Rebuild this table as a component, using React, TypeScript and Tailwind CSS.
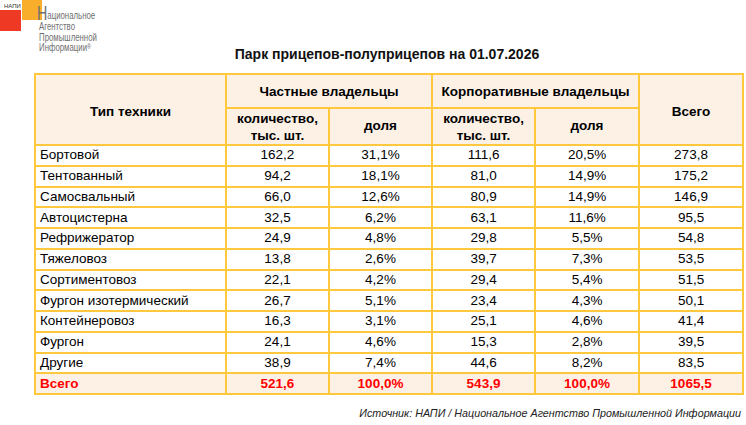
import React from "react";

const rows: [string, string, string, string, string, string][] = [
  ["Бортовой", "162,2", "31,1%", "111,6", "20,5%", "273,8"],
  ["Тентованный", "94,2", "18,1%", "81,0", "14,9%", "175,2"],
  ["Самосвальный", "66,0", "12,6%", "80,9", "14,9%", "146,9"],
  ["Автоцистерна", "32,5", "6,2%", "63,1", "11,6%", "95,5"],
  ["Рефрижератор", "24,9", "4,8%", "29,8", "5,5%", "54,8"],
  ["Тяжеловоз", "13,8", "2,6%", "39,7", "7,3%", "53,5"],
  ["Сортиментовоз", "22,1", "4,2%", "29,4", "5,4%", "51,5"],
  ["Фургон изотермический", "26,7", "5,1%", "23,4", "4,3%", "50,1"],
  ["Контейнеровоз", "16,3", "3,1%", "25,1", "4,6%", "41,4"],
  ["Фургон", "24,1", "4,6%", "15,3", "2,8%", "39,5"],
  ["Другие", "38,9", "7,4%", "44,6", "8,2%", "83,5"],
];

const bd = "border-2 border-[#ffc83d]";

export default function App() {
  return (
    <div className="relative w-[746px] h-[425px] bg-white overflow-hidden" style={{ fontFamily: "'Liberation Sans', Arial, sans-serif" }}>
      {/* Logo */}
      <div className="absolute left-0 top-0 w-[130px] h-[55px]">
        <div className="absolute left-[22px] top-0 w-[20px] h-[20px] bg-[#f9ae2b]" />
        <div className="absolute left-0 top-[10px] w-[21px] h-[21px] bg-[#ee3a24]" />
        <div className="absolute left-[4px] top-[3px] text-[6px] leading-[7px] text-[#333]">НАПИ</div>
        <div
          className="absolute left-[37px] top-[4px] origin-top-left scale-x-[0.68] text-[#6f6f6f] text-[11.5px] leading-[10.5px] whitespace-nowrap"
          style={{ fontFamily: "'Liberation Sans', sans-serif" }}
        >
          <div className="flex items-end">
            <span className="text-[21px] leading-[17px]">Н</span>
            <span className="leading-[11px]">ациональное</span>
          </div>
          <div className="pl-[3px]">Агентство</div>
          <div className="pl-[3px]">Промышленной</div>
          <div className="pl-[3px]">
            Информации<span className="text-[8px] align-top">®</span>
          </div>
        </div>
      </div>

      {/* Title */}
      <div className="absolute left-0 right-0 top-[44px] pl-[28px] text-center text-[14px] font-bold text-[#111]">
        Парк прицепов-полуприцепов на 01.07.2026
      </div>

      {/* Table */}
      <table
        className="absolute left-[34px] top-[73px] border-collapse table-fixed text-[13.5px] text-black"
        style={{ width: 708, fontFamily: "'Liberation Sans', Arial, sans-serif" }}
      >
        <colgroup>
          <col style={{ width: 191 }} />
          <col style={{ width: 103 }} />
          <col style={{ width: 103 }} />
          <col style={{ width: 103 }} />
          <col style={{ width: 104 }} />
          <col style={{ width: 104 }} />
        </colgroup>
        <thead>
          <tr className="bg-[#fdf1e6] h-[34px] font-bold">
            <th rowSpan={2} className={`${bd} font-bold text-center align-middle pt-[5px]`}>Тип техники</th>
            <th colSpan={2} className={`${bd} font-bold text-center pt-[2px]`}>Частные владельцы</th>
            <th colSpan={2} className={`${bd} font-bold text-center pt-[2px]`}>Корпоративные владельцы</th>
            <th rowSpan={2} className={`${bd} font-bold text-center align-middle pt-[5px]`}>Всего</th>
          </tr>
          <tr className="bg-[#fdf1e6] h-[37px]">
            <th className={`${bd} font-bold text-center leading-[17px]`}>количество,<br />тыс. шт.</th>
            <th className={`${bd} font-bold text-center`}>доля</th>
            <th className={`${bd} font-bold text-center leading-[17px]`}>количество,<br />тыс. шт.</th>
            <th className={`${bd} font-bold text-center`}>доля</th>
          </tr>
        </thead>
        <tbody>
          {rows.map((r) => (
            <tr key={r[0]} className="h-[20.75px]">
              <td className={`${bd} pl-[4px] py-0 leading-[16px]`}>{r[0]}</td>
              {r.slice(1).map((v, i) => (
                <td key={i} className={`${bd} text-center py-0 leading-[16px]`}>{v}</td>
              ))}
            </tr>
          ))}
          <tr className="h-[20.75px] bg-[#fdf1e6] text-[#ff0000] font-bold">
            <td className={`${bd} pl-[4px] py-0 leading-[16px]`}>Всего</td>
            <td className={`${bd} text-center py-0 leading-[16px]`}>521,6</td>
            <td className={`${bd} text-center py-0 leading-[16px]`}>100,0%</td>
            <td className={`${bd} text-center py-0 leading-[16px]`}>543,9</td>
            <td className={`${bd} text-center py-0 leading-[16px]`}>100,0%</td>
            <td className={`${bd} text-center py-0 leading-[16px]`}>1065,5</td>
          </tr>
        </tbody>
      </table>

      {/* Source */}
      <div className="absolute right-[5px] top-[405px] text-[10.75px] italic text-[#222]">
        Источник: НАПИ / Национальное Агентство Промышленной Информации
      </div>
    </div>
  );
}
